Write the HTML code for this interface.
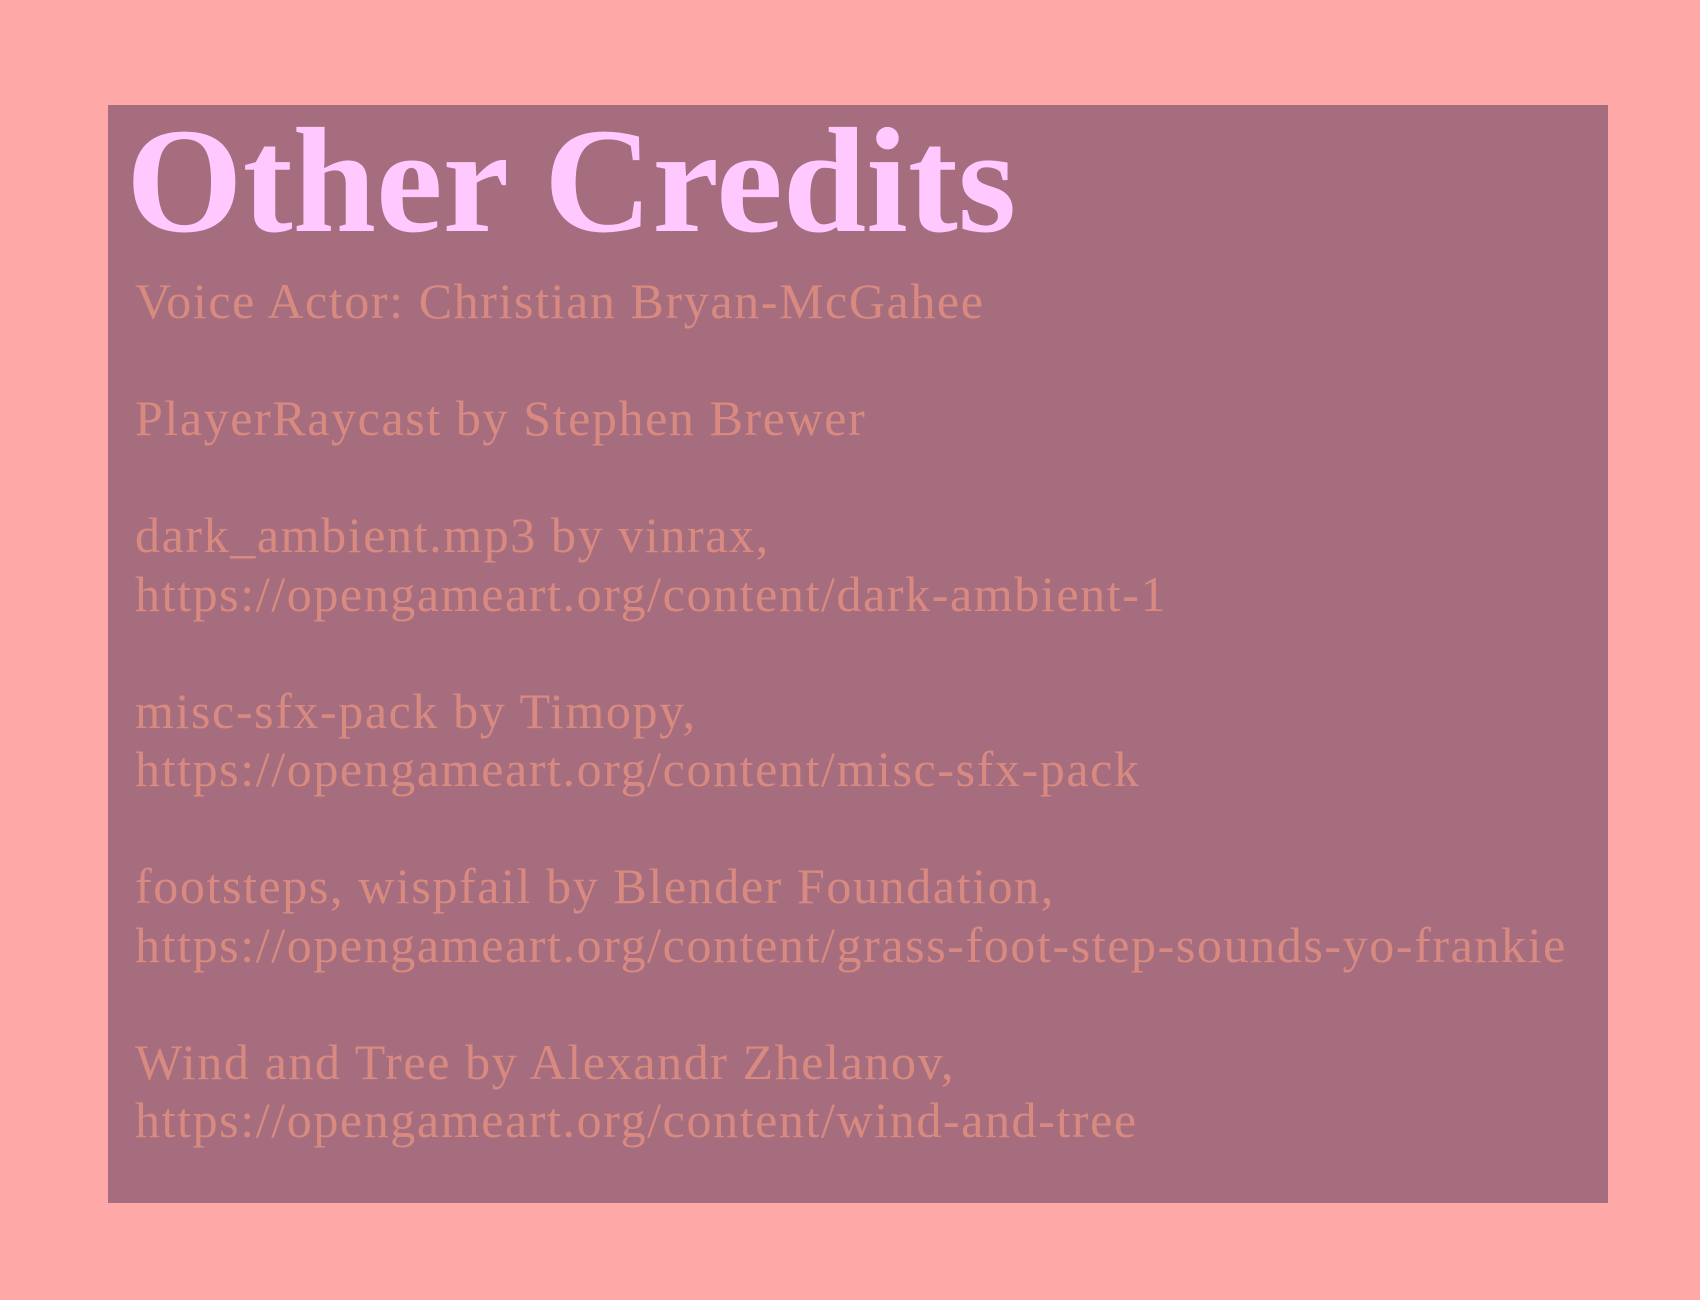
<!DOCTYPE html>
<html><head><style>
html,body{margin:0;padding:0;}
body{width:1700px;height:1300px;background:#ffa8a8;position:relative;overflow:hidden;font-family:"Liberation Serif",serif;}
.panel{position:absolute;left:108px;top:105px;width:1500px;height:1098px;background:#a66d7e;}
h1{position:absolute;left:126px;top:96px;margin:0;font-size:150px;line-height:170px;font-weight:bold;color:#ffc8ff;white-space:nowrap;}
.txt{position:absolute;left:135px;top:272px;font-size:50px;letter-spacing:1.6px;line-height:58.5px;color:#d98a80;white-space:pre;}
</style></head><body>
<div class="panel"></div>
<h1>Other Credits</h1>
<div class="txt">Voice Actor: Christian Bryan-McGahee

PlayerRaycast by Stephen Brewer

dark_ambient.mp3 by vinrax,
https://opengameart.org/content/dark-ambient-1

misc-sfx-pack by Timopy,
https://opengameart.org/content/misc-sfx-pack

footsteps, wispfail by Blender Foundation,
https://opengameart.org/content/grass-foot-step-sounds-yo-frankie

Wind and Tree by Alexandr Zhelanov,
https://opengameart.org/content/wind-and-tree</div>
</body></html>
